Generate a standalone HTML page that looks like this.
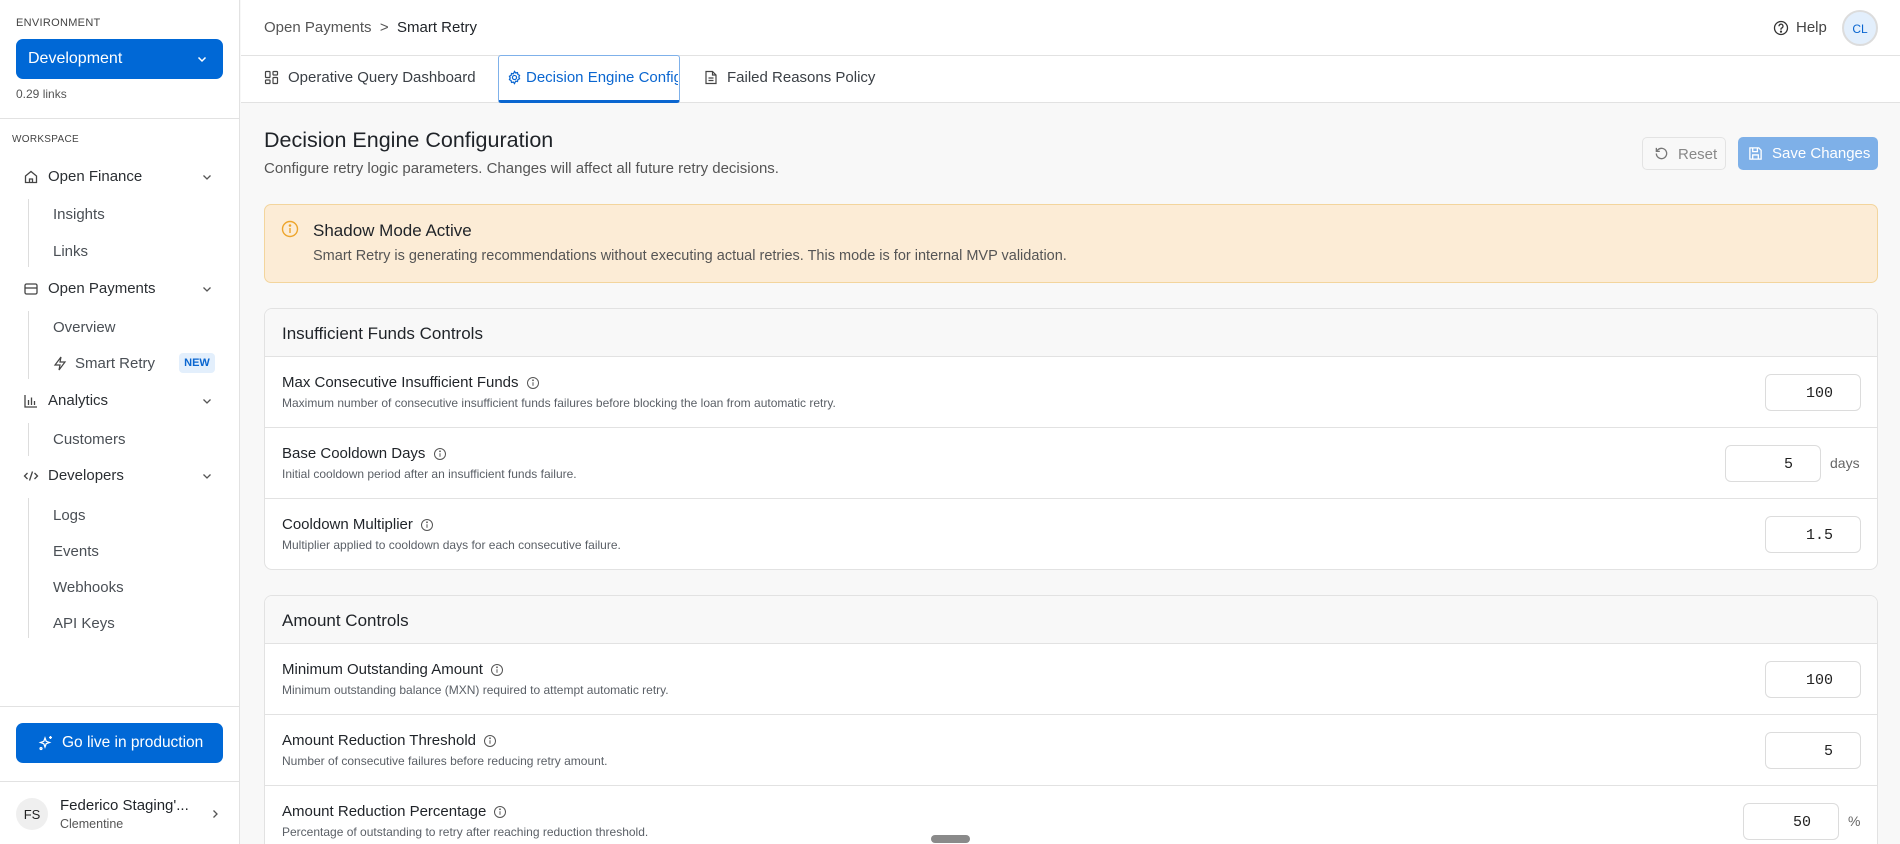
<!DOCTYPE html>
<html style="width:1900px;height:844px;overflow:hidden"><head><meta charset="utf-8"><style>
*{box-sizing:border-box;margin:0;padding:0}
body{width:1900px;height:844px;overflow:hidden;font-family:"Liberation Sans",sans-serif;background:#f8f8f8;color:#1f2328}
#w{position:relative;width:1900px;height:844px;overflow:hidden;background:#f8f8f8}
.a{position:absolute;white-space:nowrap}
.sb{position:absolute;left:0;top:0;width:240px;height:844px;background:#fff;border-right:1px solid #e2e2e2}
.hl{position:absolute;left:0;height:1px;background:#e2e2e2}
.nav{font-size:15px;color:#2b2f33}
.sub{font-size:15px;color:#4a4f55}
.card{position:absolute;left:264px;width:1614px;background:#fff;border:1px solid #e2e2e2;border-radius:8px;overflow:hidden}
.ch{height:48px;background:#f8f8f8;border-bottom:1px solid #e2e2e2;font-size:17px;padding:15px 0 0 17px;color:#1f2328}
.row{position:relative;height:71px;border-bottom:1px solid #e2e2e2}
.row:last-child{border-bottom:none}
.rt{position:absolute;left:17px;top:17px;font-size:15px;color:#1f2328}
.rd{position:absolute;left:17px;top:39px;font-size:12px;color:#5b6067}
.inp{position:absolute;top:17px;width:96px;height:37px;border:1px solid #dcdcdc;border-radius:6px;font-family:"Liberation Mono",monospace;font-size:15px;text-align:right;padding:10px 27px 0 0;background:#fff;color:#222}
.suf{position:absolute;top:27px;font-size:14px;color:#666}
.ic{display:inline-block;vertical-align:middle;margin-left:3px}
</style></head><body><div id="w">
<div class="sb">
<div class="a" style="left:16px;top:17px;font-size:11px;color:#444;letter-spacing:.3px">ENVIRONMENT</div>
<div class="a" style="left:16px;top:39px;width:207px;height:40px;background:#0068d6;border-radius:7px;color:#fff;font-size:16px;padding:11px 0 0 12px">Development
<svg class="a" style="left:180px;top:14px" width="12" height="12" viewBox="0 0 12 12"><path d="M2.5 4.5L6 8l3.5-3.5" fill="none" stroke="#fff" stroke-width="1.5"/></svg></div>
<div class="a" style="left:16px;top:87px;font-size:12px;color:#555">0.29 links</div>
<div class="hl" style="top:118px;width:240px"></div>
<div class="a" style="left:12px;top:134px;font-size:10px;color:#444;letter-spacing:.3px">WORKSPACE</div>

<svg class="a" style="left:23px;top:169px" width="16" height="16" viewBox="0 0 16 16" fill="none" stroke="#444" stroke-width="1.3"><path d="M2.5 7L8 2.5 13.5 7v6.5h-11z"/><path d="M6.5 13.5V10h3v3.5"/></svg>
<div class="a nav" style="left:48px;top:168px">Open Finance</div>
<svg class="a" style="left:201px;top:171px" width="12" height="12" viewBox="0 0 12 12"><path d="M2.5 4.5L6 8l3.5-3.5" fill="none" stroke="#555" stroke-width="1.3"/></svg>
<div class="a" style="left:28px;top:199px;width:1px;height:68px;background:#ddd"></div>
<div class="a sub" style="left:53px;top:206px">Insights</div>
<div class="a sub" style="left:53px;top:243px">Links</div>

<svg class="a" style="left:23px;top:281px" width="16" height="16" viewBox="0 0 16 16" fill="none" stroke="#444" stroke-width="1.3"><rect x="2" y="3" width="12" height="10" rx="1.5"/><path d="M2 7h12"/></svg>
<div class="a nav" style="left:48px;top:280px">Open Payments</div>
<svg class="a" style="left:201px;top:283px" width="12" height="12" viewBox="0 0 12 12"><path d="M2.5 4.5L6 8l3.5-3.5" fill="none" stroke="#555" stroke-width="1.3"/></svg>
<div class="a" style="left:28px;top:311px;width:1px;height:68px;background:#ddd"></div>
<div class="a sub" style="left:53px;top:319px">Overview</div>
<svg class="a" style="left:53px;top:356px" width="14" height="15" viewBox="0 0 14 15" fill="none" stroke="#444" stroke-width="1.2"><path d="M8 1L2 9h5l-1 5 6-8H7z"/></svg>
<div class="a sub" style="left:75px;top:355px">Smart Retry</div>
<div class="a" style="left:179px;top:353px;width:36px;height:20px;background:#e3effc;border-radius:4px;color:#0a66d0;font-size:11px;font-weight:bold;text-align:center;padding-top:4px">NEW</div>

<svg class="a" style="left:23px;top:393px" width="16" height="16" viewBox="0 0 16 16" fill="none" stroke="#444" stroke-width="1.3"><path d="M2 2v12h12M5.5 12V7M8.5 12V4.5M11.5 12V8"/></svg>
<div class="a nav" style="left:48px;top:392px">Analytics</div>
<svg class="a" style="left:201px;top:395px" width="12" height="12" viewBox="0 0 12 12"><path d="M2.5 4.5L6 8l3.5-3.5" fill="none" stroke="#555" stroke-width="1.3"/></svg>
<div class="a" style="left:28px;top:423px;width:1px;height:33px;background:#ddd"></div>
<div class="a sub" style="left:53px;top:431px">Customers</div>

<svg class="a" style="left:23px;top:468px" width="16" height="16" viewBox="0 0 16 16" fill="none" stroke="#444" stroke-width="1.3"><path d="M4.5 5L1.5 8l3 3M11.5 5l3 3-3 3M9.5 3.5l-3 9"/></svg>
<div class="a nav" style="left:48px;top:467px">Developers</div>
<svg class="a" style="left:201px;top:470px" width="12" height="12" viewBox="0 0 12 12"><path d="M2.5 4.5L6 8l3.5-3.5" fill="none" stroke="#555" stroke-width="1.3"/></svg>
<div class="a" style="left:28px;top:498px;width:1px;height:140px;background:#ddd"></div>
<div class="a sub" style="left:53px;top:507px">Logs</div>
<div class="a sub" style="left:53px;top:543px">Events</div>
<div class="a sub" style="left:53px;top:579px">Webhooks</div>
<div class="a sub" style="left:53px;top:615px">API Keys</div>

<div class="hl" style="top:706px;width:240px"></div>
<div class="a" style="left:16px;top:723px;width:207px;height:40px;background:#0068d6;border-radius:7px;color:#fff;font-size:15.5px;padding:11px 0 0 46px">Go live in production
<svg class="a" style="left:22px;top:12px" width="16" height="16" viewBox="0 0 16 16" fill="none" stroke="#fff" stroke-width="1.3"><path d="M7 3l1.2 3.3L11.5 7.5 8.2 8.7 7 12 5.8 8.7 2.5 7.5 5.8 6.3z"/><path d="M12.5 1v3M11 2.5h3M3 12.5a1 1 0 1 0 .01 0"/></svg></div>
<div class="hl" style="top:781px;width:240px"></div>
<div class="a" style="left:16px;top:798px;width:32px;height:32px;border-radius:50%;background:#efefef;font-size:13px;text-align:center;padding-top:9px;color:#222">FS</div>
<div class="a" style="left:60px;top:797px;font-size:15px;color:#1f2328">Federico Staging'...</div>
<div class="a" style="left:60px;top:817px;font-size:12.5px;color:#555">Clementine</div>
<svg class="a" style="left:209px;top:808px" width="12" height="12" viewBox="0 0 12 12"><path d="M4.5 2.5L8 6l-3.5 3.5" fill="none" stroke="#555" stroke-width="1.3"/></svg>
</div>

<div class="a" style="left:241px;top:0;width:1659px;height:102px;background:#fff"></div>
<div class="hl" style="left:241px;top:55px;width:1659px"></div>
<div class="hl" style="left:241px;top:102px;width:1659px"></div>
<div class="a" style="left:264px;top:19px;font-size:15px;color:#555">Open Payments &nbsp;&gt;&nbsp; <span style="color:#1f2328">Smart Retry</span></div>
<svg class="a" style="left:1773px;top:20px" width="16" height="16" viewBox="0 0 16 16" fill="none" stroke="#333" stroke-width="1.3"><circle cx="8" cy="8" r="6.5"/><path d="M6 6.2a2 2 0 1 1 2.5 1.9c-.4.2-.5.5-.5 1v.6"/><circle cx="8" cy="11.6" r=".5" fill="#333"/></svg>
<div class="a" style="left:1796px;top:19px;font-size:15px;color:#444">Help</div>
<div class="a" style="left:1842px;top:10px;width:36px;height:36px;border-radius:50%;background:#e3effc;border:2px solid #dcdcdc;color:#0a66d0;font-size:12px;text-align:center;padding-top:10px">CL</div>

<svg class="a" style="left:264px;top:70px" width="15" height="15" viewBox="0 0 15 15" fill="none" stroke="#444" stroke-width="1.2"><rect x="1.5" y="1.5" width="4.5" height="6" rx=".8"/><rect x="9" y="1.5" width="4.5" height="3.5" rx=".8"/><rect x="9" y="7.5" width="4.5" height="6" rx=".8"/><rect x="1.5" y="10" width="4.5" height="3.5" rx=".8"/></svg>
<div class="a" style="left:288px;top:69px;font-size:15px;color:#3a3f45">Operative Query Dashboard</div>
<div class="a" style="left:498px;top:55px;width:182px;height:48px;border:1.5px solid #7fb1ea;border-bottom:3px solid #0a66d0;border-radius:3px;background:#fff"></div>
<svg class="a" style="left:507px;top:70px" width="15" height="15" viewBox="0 0 16 16" fill="none" stroke="#0a66d0" stroke-width="1.3"><circle cx="8" cy="8" r="2.2"/><path d="M8 1.5l1.2 1.6 2-.4.4 2 1.8 1-.8 1.8.8 1.8-1.8 1-.4 2-2-.4L8 14.5l-1.2-1.6-2 .4-.4-2-1.8-1 .8-1.8-.8-1.8 1.8-1 .4-2 2 .4z"/></svg>
<div class="a" style="left:526px;top:69px;width:152px;overflow:hidden;font-size:15px;color:#0a66d0">Decision Engine Config</div>
<svg class="a" style="left:704px;top:70px" width="14" height="15" viewBox="0 0 14 15" fill="none" stroke="#444" stroke-width="1.2"><path d="M2 1.5h6.5L12 5v8.5H2z"/><path d="M8.5 1.5V5H12M4.5 8h5M4.5 10.5h5"/></svg>
<div class="a" style="left:727px;top:69px;font-size:15px;color:#3a3f45">Failed Reasons Policy</div>

<div class="a" style="left:264px;top:128px;font-size:21.5px;color:#1f2328">Decision Engine Configuration</div>
<div class="a" style="left:264px;top:160px;font-size:15px;color:#555">Configure retry logic parameters. Changes will affect all future retry decisions.</div>
<div class="a" style="left:1642px;top:137px;width:84px;height:33px;border:1px solid #e3e3e3;border-radius:5px;background:#f8f8f8;font-size:15px;color:#888;padding:8px 0 0 35px">Reset
<svg class="a" style="left:11px;top:8px" width="15" height="15" viewBox="0 0 16 16" fill="none" stroke="#777" stroke-width="1.4"><path d="M2.5 8A5.5 5.5 0 1 0 4.2 4L2.5 5.7"/><path d="M2.5 2v3.7h3.7"/></svg></div>
<div class="a" style="left:1738px;top:137px;width:140px;height:33px;border-radius:5px;background:#7eb0e8;font-size:15px;color:#fff;padding:8px 0 0 34px">Save Changes
<svg class="a" style="left:10px;top:9px" width="15" height="15" viewBox="0 0 16 16" fill="none" stroke="#fff" stroke-width="1.4"><path d="M2 2h9.5L14 4.5V14H2z"/><path d="M5 2v4h5V2M5 14v-4.5h6V14"/></svg></div>

<div class="a" style="left:264px;top:204px;width:1614px;height:79px;background:#fcecd6;border:1px solid #f3d59d;border-radius:7px"></div>
<svg class="a" style="left:281px;top:220px" width="18" height="18" viewBox="0 0 18 18" fill="none" stroke="#eda52c" stroke-width="1.4"><circle cx="9" cy="9" r="7.5"/><path d="M9 8v5"/><circle cx="9" cy="5.5" r=".6" fill="#eda52c"/></svg>
<div class="a" style="left:313px;top:221px;font-size:17px;color:#1f2328">Shadow Mode Active</div>
<div class="a" style="left:313px;top:248px;font-size:14.5px;color:#555">Smart Retry is generating recommendations without executing actual retries. This mode is for internal MVP validation.</div>

<div class="card" style="top:308px;height:262px">
<div class="ch">Insufficient Funds Controls</div>
<div class="row"><div class="rt">Max Consecutive Insufficient Funds <svg class="ic" width="14" height="14" viewBox="0 0 14 14" fill="none" stroke="#555" stroke-width="1"><circle cx="7" cy="7" r="5.5"/><path d="M7 6.2v3.5"/><circle cx="7" cy="4.3" r=".4" fill="#555"/></svg></div><div class="rd">Maximum number of consecutive insufficient funds failures before blocking the loan from automatic retry.</div><div class="inp" style="left:1500px">100</div></div>
<div class="row"><div class="rt">Base Cooldown Days <svg class="ic" width="14" height="14" viewBox="0 0 14 14" fill="none" stroke="#555" stroke-width="1"><circle cx="7" cy="7" r="5.5"/><path d="M7 6.2v3.5"/><circle cx="7" cy="4.3" r=".4" fill="#555"/></svg></div><div class="rd">Initial cooldown period after an insufficient funds failure.</div><div class="inp" style="left:1460px">5</div><div class="suf" style="left:1565px">days</div></div>
<div class="row"><div class="rt">Cooldown Multiplier <svg class="ic" width="14" height="14" viewBox="0 0 14 14" fill="none" stroke="#555" stroke-width="1"><circle cx="7" cy="7" r="5.5"/><path d="M7 6.2v3.5"/><circle cx="7" cy="4.3" r=".4" fill="#555"/></svg></div><div class="rd">Multiplier applied to cooldown days for each consecutive failure.</div><div class="inp" style="left:1500px">1.5</div></div>
</div>

<div class="card" style="top:595px;height:249px;border-bottom:none;border-radius:8px 8px 0 0">
<div class="ch">Amount Controls</div>
<div class="row"><div class="rt">Minimum Outstanding Amount <svg class="ic" width="14" height="14" viewBox="0 0 14 14" fill="none" stroke="#555" stroke-width="1"><circle cx="7" cy="7" r="5.5"/><path d="M7 6.2v3.5"/><circle cx="7" cy="4.3" r=".4" fill="#555"/></svg></div><div class="rd">Minimum outstanding balance (MXN) required to attempt automatic retry.</div><div class="inp" style="left:1500px">100</div></div>
<div class="row"><div class="rt">Amount Reduction Threshold <svg class="ic" width="14" height="14" viewBox="0 0 14 14" fill="none" stroke="#555" stroke-width="1"><circle cx="7" cy="7" r="5.5"/><path d="M7 6.2v3.5"/><circle cx="7" cy="4.3" r=".4" fill="#555"/></svg></div><div class="rd">Number of consecutive failures before reducing retry amount.</div><div class="inp" style="left:1500px">5</div></div>
<div class="row" style="height:58px"><div class="rt">Amount Reduction Percentage <svg class="ic" width="14" height="14" viewBox="0 0 14 14" fill="none" stroke="#555" stroke-width="1"><circle cx="7" cy="7" r="5.5"/><path d="M7 6.2v3.5"/><circle cx="7" cy="4.3" r=".4" fill="#555"/></svg></div><div class="rd">Percentage of outstanding to retry after reaching reduction threshold.</div><div class="inp" style="left:1478px">50</div><div class="suf" style="left:1583px">%</div></div>
</div>

<div class="a" style="left:931px;top:835px;width:39px;height:8px;border-radius:4px;background:#8a8a8a"></div>
</div></body></html>
